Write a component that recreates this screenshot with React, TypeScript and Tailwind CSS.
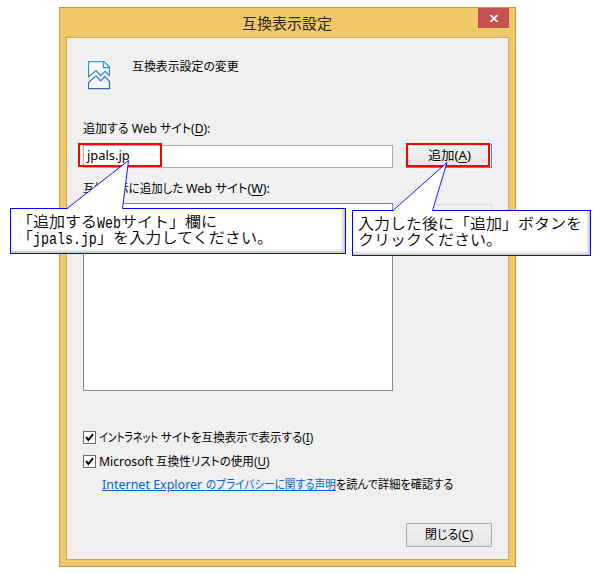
import { useLayoutEffect, useRef, useState } from 'react';
import type { ReactNode } from 'react';

const uiFont = "font-['Noto_Sans','Noto_Sans_CJK_JP',sans-serif]";
const noteFont = "font-['Liberation_Mono','Noto_Sans_CJK_JP',monospace]";

/* One line of text condensed or widened to a set width. */
function Fit({ width, children, className = '', line = '' }: { width: number; children: ReactNode; className?: string; line?: string }) {
  const ref = useRef<HTMLSpanElement>(null);
  const [scale, setScale] = useState(1);
  useLayoutEffect(() => {
    if (ref.current) setScale(width / ref.current.offsetWidth);
  }, [width]);
  return (
    <span className={`block shrink-0 whitespace-nowrap ${className}`} style={{ width }}>
      <span ref={ref} className={`inline-block origin-left align-top ${line}`} style={{ transform: `scaleX(${scale})` }}>
        {children}
      </span>
    </span>
  );
}

function Key({ children }: { children: string }) {
  return <span className="underline underline-offset-2">{children}</span>;
}

function Check() {
  return (
    <span className="flex size-[13px] shrink-0 items-center justify-center border border-[#707070] bg-white">
      <svg width="11" height="11" viewBox="0 0 11 11" fill="none" stroke="#000" strokeWidth="2">
        <path d="M2 5.2 L4.4 8 L9 2.2" />
      </svg>
    </span>
  );
}

function PageIcon() {
  return (
    <svg width="24" height="30" viewBox="0 0 24 30" fill="none" className="shrink-0">
      <defs>
        <linearGradient id="page" x1="0" y1="1" x2="0" y2="29" gradientUnits="userSpaceOnUse">
          <stop stopColor="#2ba6d4" />
          <stop offset="1" stopColor="#3767b4" />
        </linearGradient>
      </defs>
      <path d="M1 17.5V1H17L23 7V16.5L18 11.5L13 16.5L8.500 11L1 17.5ZM1 28V22L8.500 15.500L13 20.500L18 15.500L23 21V28Z" fill="#f8f8f8" stroke="#f8f8f8" strokeWidth="2" />
      <g stroke="url(#page)" strokeWidth="1.250">
        <path d="M.5 17V1.500H16L21.500 7V15.500L17 11.300L12.700 15.500L8 10.500L.5 17" />
        <path d="M15.500 1.500V7.500H21.500" />
        <path d="M.5 28.500V22.500L8 15.800L12.700 20.800L17 16.500L21.500 21.500V28.500Z" />
      </g>
    </svg>
  );
}

export default function App() {
  return (
    <div className={`relative h-[574px] w-[600px] overflow-hidden bg-white pl-[59px] pt-[7px] text-[12px] leading-[16px] text-black ${uiFont}`}>
      <div className="flex h-[560px] w-[457px] flex-col border border-[#b89a4e] bg-[#f0c869] px-[6px] pb-[6px]">
        <div className="flex h-[29px] shrink-0 items-start">
          <div className="flex h-[29px] w-[412px] justify-end pr-[146px]">
            <Fit width={90} className="pt-[5px] text-[15px] leading-[20px] text-[#2c2920]">互換表示設定</Fit>
          </div>
          <button aria-label="閉じる" className="flex h-[20px] w-[31px] items-center justify-center bg-[#c75050]">
            <svg width="8" height="7" viewBox="0 0 8 7" stroke="#fff" strokeWidth="1.700">
              <path d="M.5 0L7.500 7M7.500 0L.5 7" />
            </svg>
          </button>
        </div>

        <div className="flex min-h-0 flex-1 flex-col border border-[#cca959] bg-[#f0f0f0] px-[16px] [font-feature-settings:'palt']">
          <div className="flex h-[83px] shrink-0 items-start pl-[5px] pt-[22px]">
            <PageIcon />
            <Fit width={107} className="ml-[20px] -mt-px">互換表示設定の変更</Fit>
          </div>
          <Fit width={127} className="h-[24px]">追加する Web サイト(<Key>D</Key>):</Fit>
          <div className="flex h-[24px] shrink-0 items-start justify-between">
            <div className="flex h-[23px] w-[310px] items-center border border-[#abadb3] bg-white pb-px pl-[3px]">
              <Fit width={43}>jpals.jp</Fit>
            </div>
            <button className="-mt-px flex h-[24px] w-[86px] items-center justify-center border border-[#3399ff] bg-linear-to-b from-[#f0f0f0] to-[#e5e5e5] pr-[3px]">
              <Fit width={43}>追加(<Key>A</Key>)</Fit>
            </button>
          </div>
          <div className="mt-[12px] flex h-[22px] shrink-0 gap-[3px]">
            <Fit width={100}>互換表示に追加した</Fit>
            <Fit width={84}>Web サイト(<Key>W</Key>):</Fit>
          </div>
          <div className="flex shrink-0 items-start justify-between">
            <div className="h-[188px] w-[310px] border border-[#828790] bg-white" />
            <div className="mt-px h-[24px] w-[86px] border border-[#d9d9d9] bg-[#efefef]" />
          </div>
          <div className="mt-[38px] flex h-[24px] shrink-0 items-start gap-[3px] pt-px">
            <span className="pt-px"><Check /></span>
            <Fit width={59}>イントラネット</Fit>
            <Fit width={152}>サイトを互換表示で表示する(<Key>I</Key>)</Fit>
          </div>
          <div className="flex h-[24px] shrink-0 items-start gap-[3px] pt-px">
            <span className="pt-px"><Check /></span>
            <Fit width={54}>Microsoft</Fit>
            <Fit width={113}>互換性リストの使用(<Key>U</Key>)</Fit>
          </div>
          <div className="flex h-[46px] shrink-0 items-start pl-[19px]">
            <Fit width={104} className="whitespace-pre text-[#0066cc]" line="underline underline-offset-1">{'Internet Explorer\u00a0'}</Fit>
            <Fit width={130} className="text-[#0066cc]" line="underline underline-offset-1">のプライバシーに関する声明</Fit>
            <Fit width={117}>を読んで詳細を確認する</Fit>
          </div>
          <div className="flex shrink-0 justify-end">
            <button className="flex h-[24px] w-[86px] items-center justify-center border border-[#acacac] bg-linear-to-b from-[#f0f0f0] to-[#e5e5e5]">
              <Fit width={48}>閉じる(<Key>C</Key>)</Fit>
            </button>
          </div>
        </div>
      </div>

      {/* Highlight frames and callouts lie over the dialog. */}
      <div className="absolute left-[78px] top-[143px] h-[24px] w-[84px] border-2 border-[#ff0000]" />
      <div className="absolute left-[406px] top-[143px] h-[24px] w-[84px] border-2 border-[#ff0000]" />

      <div className={`absolute left-[10px] top-[208px] h-[46px] w-[336px] border border-[#0000ff] bg-white pl-[6px] pt-[7px] text-[15px] font-[350] leading-[16px] shadow-[inset_-2px_-2px_3px_#c4c4c4] ${noteFont}`}>
        <div className="flex whitespace-nowrap">
          <Fit width={80}>「追加する</Fit>
          <Fit width={24} className="text-[16px]">Web</Fit>
          <Fit width={96}>サイト」欄に</Fit>
        </div>
        <div className="flex whitespace-nowrap">
          <Fit width={16}>「</Fit>
          <Fit width={64} className="text-[16px]">jpals.jp</Fit>
          <Fit width={176}>」を入力してください。</Fit>
        </div>
      </div>
      <div className={`absolute left-[352px] top-[210px] h-[46px] w-[239px] border border-[#0000ff] bg-white pl-[5px] pt-[7px] text-[15px] font-[350] leading-[16px] shadow-[inset_-2px_-2px_3px_#c4c4c4] ${noteFont}`}>
        <Fit width={224}>入力した後に「追加」ボタンを</Fit>
        <Fit width={144}>クリックください。</Fit>
      </div>
      <svg className="absolute left-0 top-0" width="600" height="260" viewBox="0 0 600 260" fill="none">
        <path d="M67 209L128.500 160.500L122.500 209Z" fill="#fff" />
        <path d="M67 208.500L128.500 160.500L122.500 208.500" stroke="#0000ff" strokeWidth=".9" />
        <path d="M393 211L447 162.500L432.500 211Z" fill="#fff" />
        <path d="M393 210.500L447 162.500L432.500 210.500" stroke="#0000ff" strokeWidth=".9" />
      </svg>
    </div>
  );
}
